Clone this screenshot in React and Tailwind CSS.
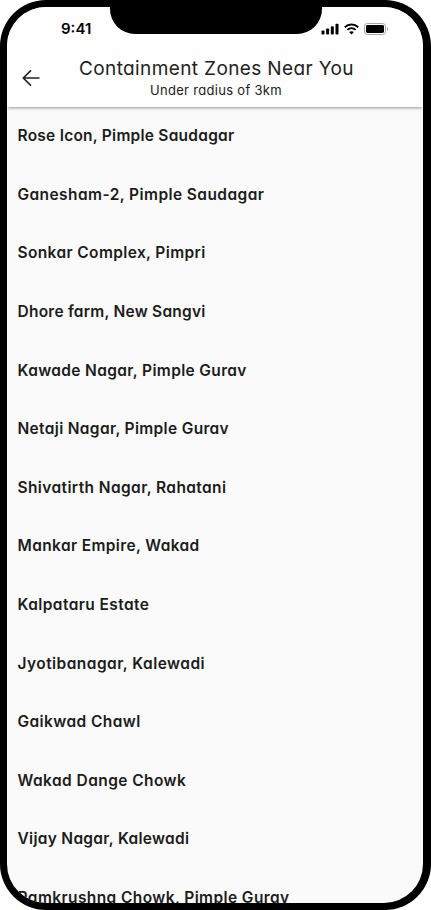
const zones = [
  { name: 'Rose Icon, Pimple Saudagar', tracking: 'tracking-[0.24px]' },
  { name: 'Ganesham-2, Pimple Saudagar', tracking: 'tracking-[0.42px]' },
  { name: 'Sonkar Complex, Pimpri', tracking: 'tracking-[0.37px]' },
  { name: 'Dhore farm, New Sangvi', tracking: 'tracking-[0.24px]' },
  { name: 'Kawade Nagar, Pimple Gurav', tracking: 'tracking-[0.35px]' },
  { name: 'Netaji Nagar, Pimple Gurav', tracking: 'tracking-[0.33px]' },
  { name: 'Shivatirth Nagar, Rahatani', tracking: 'tracking-[0.39px]' },
  { name: 'Mankar Empire, Wakad', tracking: 'tracking-[0.37px]' },
  { name: 'Kalpataru Estate', tracking: 'tracking-[0.41px]' },
  { name: 'Jyotibanagar, Kalewadi', tracking: 'tracking-[0.46px]' },
  { name: 'Gaikwad Chawl', tracking: 'tracking-[0.41px]' },
  { name: 'Wakad Dange Chowk', tracking: 'tracking-[0.43px]' },
  { name: 'Vijay Nagar, Kalewadi', tracking: 'tracking-[0.29px]' },
  { name: 'Ramkrushna Chowk, Pimple Gurav', tracking: 'tracking-[0.4px]' },
];

function StatusBar() {
  return (
    <div className="flex h-[43px] shrink-0 items-center justify-between bg-white pl-[54px] pr-[34px]">
      <span className="text-[15px] leading-[20px] font-semibold text-black">9:41</span>
      <div className="flex items-center gap-[5px]">
        <svg width="18" height="12" viewBox="0 0 18 12" fill="#000">
          <rect x="0.5" y="7.5" width="3" height="4" rx="0.8" />
          <rect x="5.1" y="5.5" width="3" height="6" rx="0.8" />
          <rect x="9.8" y="3.2" width="3" height="8.3" rx="0.8" />
          <rect x="14.5" y="0.8" width="3" height="10.7" rx="0.8" />
        </svg>
        <svg width="15" height="12" viewBox="0 0 15 12" fill="none" stroke="#000" strokeWidth="1.9">
          <path d="M0.8 4.2C4.5 0.6 10.5 0.6 14.2 4.2" />
          <path d="M3.3 6.9C5.7 4.6 9.3 4.6 11.7 6.9" />
          <path d="M5.1 9.1C6.5 7.8 8.5 7.8 9.9 9.1L7.5 11.5Z" fill="#000" stroke="none" />
        </svg>
        <svg width="25" height="12" viewBox="0 0 25 12">
          <rect x="0.5" y="0.5" width="21" height="11" rx="2.8" fill="none" stroke="#a6a6a6" />
          <rect x="2" y="2" width="18" height="8" rx="1.4" fill="#000" />
          <path d="M23 4v4c1.7-.8 1.7-3.2 0-4z" fill="#a6a6a6" />
        </svg>
      </div>
    </div>
  );
}

export default function App() {
  return (
    <div className="h-[910px] w-[431px] overflow-hidden bg-white font-['Inter',sans-serif] [font-feature-settings:'cv11']">
      <div className="relative h-full w-full overflow-hidden rounded-[46px] bg-black p-[7px] pr-[8px]">
        <div className="flex h-full flex-col overflow-hidden rounded-[39px] bg-[#fafafa]">
          <StatusBar />
          <header className="relative z-10 flex h-[57px] shrink-0 items-center bg-[#fefefe] pb-[2px] shadow-[0_2px_3px_-1px_rgba(0,0,0,0.4)]">
            <svg className="ml-[15px] shrink-0" width="18" height="18" viewBox="0 0 18 18" fill="none" stroke="#222" strokeWidth="1.6">
              <path d="M17.5 9H1.5M9 1.4L1.3 9L9 16.6" />
            </svg>
            <div className="ml-[39px] w-[274px] text-center whitespace-nowrap text-[#222]">
              <h1 className="text-[19px] leading-[24px] font-normal tracking-[0.38px]">Containment Zones Near You</h1>
              <p className="text-[13px] leading-[18px] tracking-[0.3px]">Under radius of 3km</p>
            </div>
          </header>
          <ul className="shrink-0 pl-[10.5px]">
            {zones.map((zone) => (
              <li key={zone.name} className="flex h-[58.6px] items-center">
                <span className={`text-[15.5px] leading-[22px] font-semibold whitespace-nowrap text-[#1c1c1c] ${zone.tracking}`}>{zone.name}</span>
              </li>
            ))}
          </ul>
        </div>
        <div className="absolute top-0 left-[110px] h-[34px] w-[212px] rounded-b-[25px] bg-black" />
      </div>
    </div>
  );
}
